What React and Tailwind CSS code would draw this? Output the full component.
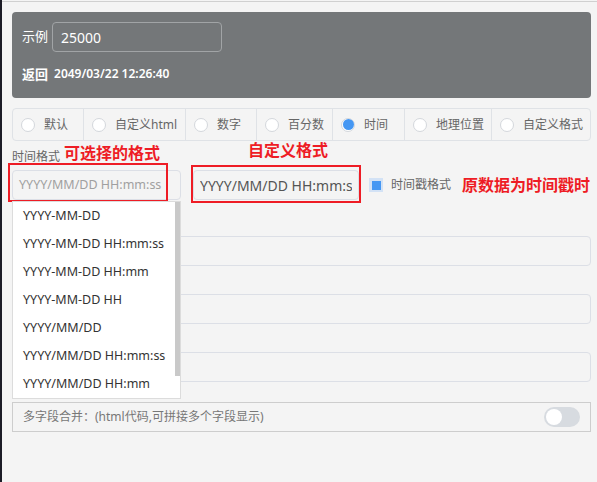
import React from 'react';

const radios = [
  { label: '默认', w: 'w-[71px]' },
  { label: '自定义html', w: 'w-[102px]' },
  { label: '数字', w: 'w-[71px]' },
  { label: '百分数', w: 'w-[76px]' },
  { label: '时间', w: 'w-[72px]', checked: true },
  { label: '地理位置', w: 'w-[87px]' },
  { label: '自定义格式', w: 'flex-1' },
];

const formats = [
  'YYYY-MM-DD',
  'YYYY-MM-DD HH:mm:ss',
  'YYYY-MM-DD HH:mm',
  'YYYY-MM-DD HH',
  'YYYY/MM/DD',
  'YYYY/MM/DD HH:mm:ss',
  'YYYY/MM/DD HH:mm',
];

const Radio = ({ label, w, checked }) => (
  <div className={`${w} h-full flex items-center gap-[9px] pl-[8px] border-r border-[#dfe2e6] last:border-r-0`}>
    <span className="w-[14px] h-[14px] rounded-full bg-white border border-[#d4d7dc] flex items-center justify-center">
      {checked && <span className="w-[11px] h-[11px] rounded-full bg-[#4597f3]" />}
    </span>
    <span className="text-[12px] text-[#666] whitespace-nowrap">{label}</span>
  </div>
);

export default function App() {
  return (
    <div className="w-[597px] h-[482px] bg-[#f4f4f4] flex overflow-hidden font-['Noto_Sans','Noto_Sans_CJK_SC',sans-serif]">
      {/* edge of the window behind */}
      <div className="w-[2px] h-full bg-[#1c1c26]" />

      <div className="flex-1 flex flex-col">
        <div className="h-px mt-px bg-[#d0d0d0]" />

        <div className="pl-[10px] pr-[6px] flex flex-col">
          {/* sample panel */}
          <div className="mt-[10px] h-[86px] rounded-[4px] bg-[#747779] pl-[10px] pt-[10px]">
            <div className="flex items-center gap-[4px]">
              <span className="text-[13px] text-white">示例</span>
              <div className="w-[170px] h-[30px] rounded-[4px] border border-[#a1a4a6] flex items-center pl-[8px] text-[14px] text-white">
                25000
              </div>
            </div>
            <div className="mt-[14px] flex items-center gap-[6px] text-[12px] leading-[16px] text-white font-semibold">
              <span className="text-[13px]">返回</span>
              <span>2049/03/22 12:26:40</span>
            </div>
          </div>

          {/* type radios */}
          <div className="mt-[10px] h-[33px] rounded-[4px] border border-[#dfe2e6] flex">
            {radios.map((r) => (
              <Radio key={r.label} {...r} />
            ))}
          </div>

          {/* format row */}
          <div className="flex">
            <div className="relative w-[169px]">
              <div className="h-[29px] flex items-end gap-[4px]">
                <span className="text-[12px] leading-[14px] text-[#666] mb-[6px]">时间格式</span>
                <span className="text-[16px] leading-[20px] font-bold text-[#ee1c25] mb-[7px]">可选择的格式</span>
              </div>
              <div className="h-[30px] rounded-[4px] border border-[#dcdfe6] flex items-center pl-[6px] text-[12.5px] text-[#a0a0a0] whitespace-nowrap overflow-hidden">
                YYYY/MM/DD HH:mm:ss
              </div>
              <div className="absolute left-[-4px] top-[22px] w-[160px] h-[39px] border-2 border-[#ee1c25] pointer-events-none" />

              {/* open dropdown */}
              <div className="absolute left-0 top-[60px] w-[169px] h-[198px] bg-white border border-[#dcdcdc] z-10">
                {formats.map((f) => (
                  <div key={f} className="h-[28px] flex items-center pl-[10px] text-[12.5px] text-[#333] whitespace-nowrap">
                    {f}
                  </div>
                ))}
                <div className="absolute right-0 top-0 w-[5px] h-[174px] bg-[#c9c9c9]" />
              </div>
            </div>

            <div className="relative ml-[12px] w-[166px]">
              <div className="h-[29px] flex items-start pl-[55px]">
                <span className="text-[16px] leading-[20px] font-bold text-[#ee1c25] mt-[-1px]">自定义格式</span>
              </div>
              <div className="h-[30px] rounded-[4px] border border-[#dcdfe6] flex items-center pl-[6px]">
                <div className="w-[152px] overflow-hidden whitespace-nowrap text-[14px] text-[#555]">
                  YYYY/MM/DD HH:mm:ss
                </div>
              </div>
              <div className="absolute left-[-2px] top-[24px] w-[170px] h-[38px] border-2 border-[#ee1c25] pointer-events-none" />
            </div>

            <div className="ml-[10px] mt-[29px] h-[30px] flex items-center">
              <span className="w-[14px] h-[14px] bg-[#d3e2f5] flex items-center justify-center">
                <span className="w-[9px] h-[9px] bg-[#4597f3]" />
              </span>
              <span className="ml-[8px] text-[12px] text-[#666]">时间戳格式</span>
              <span className="ml-[11px] text-[16px] font-bold text-[#ee1c25] whitespace-nowrap">原数据为时间戳时</span>
            </div>
          </div>

          {/* other inputs, partly behind the dropdown */}
          <div className="mt-[36px] h-[30px] rounded-[4px] border border-[#dcdfe6]" />
          <div className="mt-[28px] h-[30px] rounded-[4px] border border-[#dcdfe6]" />
          <div className="mt-[28px] h-[30px] rounded-[4px] border border-[#dcdfe6]" />

          {/* merge row */}
          <div className="mt-[20px] h-[30px] border border-[#cdcdcd] flex items-center justify-between pl-[10px] pr-[10px]">
            <span className="text-[12px] text-[#777]">多字段合并：(html代码,可拼接多个字段显示)</span>
            <span className="w-[36px] h-[20px] rounded-full bg-[#d7dbe0] flex items-center pl-[2px]">
              <span className="w-[16px] h-[16px] rounded-full bg-white" />
            </span>
          </div>
        </div>
      </div>
    </div>
  );
}
